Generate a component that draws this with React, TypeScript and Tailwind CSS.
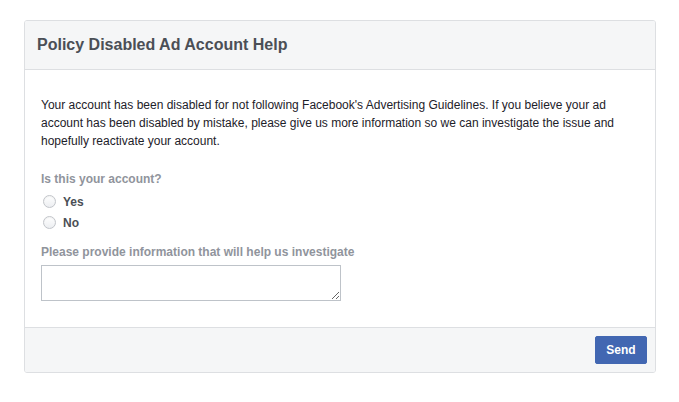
import React from "react";

function Radio({ label }: { label: string }) {
  return (
    <label className="flex items-center h-[21px] pl-[2px]">
      <span className="w-[13px] h-[13px] rounded-full border border-[#c2c5ca] bg-gradient-to-b from-white to-[#eceef1] shadow-[inset_0_1px_1px_rgba(0,0,0,0.05)]" />
      <span className="ml-[7px] text-[12px] font-bold text-[#4b4f56]">{label}</span>
    </label>
  );
}

export default function App() {
  return (
    <div className="bg-white w-[679px] h-[402px] pt-[20px] pl-[24px]" style={{ fontFamily: '"Liberation Sans", Arial, Helvetica, sans-serif' }}>
      <div className="w-[632px] border border-[#dddfe2] rounded-[3px] overflow-hidden bg-white">
        <div className="h-[49px] bg-[#f5f6f7] border-b border-[#dddfe2] flex items-center pl-[12px]">
          <h1 className="text-[16px] font-bold text-[#4b4f56]">Policy Disabled Ad Account Help</h1>
        </div>
        <div className="px-[16px] pt-[26px] pb-[26px]">
          <p className="text-[12px] leading-[18px] text-[#1d2129]">
            Your account has been disabled for not following Facebook's Advertising Guidelines. If you believe your ad account has been disabled by mistake, please give us more information so we can investigate the issue and hopefully reactivate your account.
          </p>
          <div className="mt-[20px] text-[12px] leading-[18px] font-bold text-[#90949c]">Is this your account?</div>
          <div className="mt-[3px] flex flex-col">
            <Radio label="Yes" />
            <Radio label="No" />
          </div>
          <div className="mt-[10px] text-[12px] leading-[18px] font-bold text-[#90949c]">Please provide information that will help us investigate</div>
          <textarea className="mt-[4px] block w-[300px] h-[36px] border border-[#bec3c9] outline-none resize-y" />
        </div>
        <div className="h-[45px] bg-[#f5f6f7] border-t border-[#dddfe2] flex items-center justify-end pr-[8px]">
          <button className="w-[52px] h-[28px] bg-[#4267b2] border border-[#4267b2] rounded-[2px] text-white text-[12px] font-bold">Send</button>
        </div>
      </div>
    </div>
  );
}
